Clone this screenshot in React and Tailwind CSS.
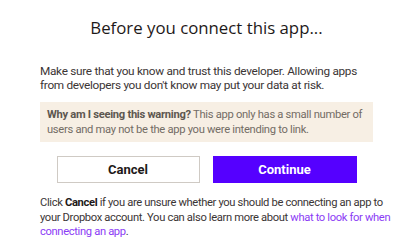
export default function App() {
  return (
    <div className="w-[413px] h-[245px] bg-white overflow-hidden" style={{ fontFamily: "Roboto, 'Liberation Sans', sans-serif" }}>
      <div className="pt-[17px] px-[40px]">
        <h1 className="text-center text-[16.8px] leading-[22px] text-[#1e1919]" style={{ fontFamily: "'Open Sans', sans-serif" }}>
          Before you connect this app...
        </h1>
        <p className="mt-[26px] text-[11.8px] leading-[13.5px] tracking-[-0.3px] text-[#3b3535]">
          Make sure that you know and trust this developer. Allowing apps from developers you don't know may put your data at risk.
        </p>
        <div className="mt-[10px] bg-[#f7efe4] pl-[7px] pr-[2px] py-[5px] text-[11.2px] leading-[15px] tracking-[-0.3px] text-[#736c64]">
          <span className="font-bold text-[#5e5750]">Why am I seeing this warning?</span> This app only has a small number of users and may not be the app you were intending to link.
        </div>
        <div className="mt-[14px] flex justify-center gap-[13px]">
          <button className="w-[143px] h-[27px] border border-[#cfcac4] bg-white text-[13px] font-bold text-[#1e1919]">
            Cancel
          </button>
          <button className="w-[144px] h-[27px] bg-[#5500ff] text-[13px] font-bold text-white">
            Continue
          </button>
        </div>
        <p className="mt-[13px] -mr-[24px] text-[11.2px] leading-[14.5px] tracking-[-0.35px] text-[#3b3535]">
          Click <span className="font-bold text-[#1e1919]">Cancel</span> if you are unsure whether you should be connecting an app to your Dropbox account. You can also learn more about <span className="text-[#8b3cf5]">what to look for when connecting an app</span>.
        </p>
      </div>
    </div>
  );
}
